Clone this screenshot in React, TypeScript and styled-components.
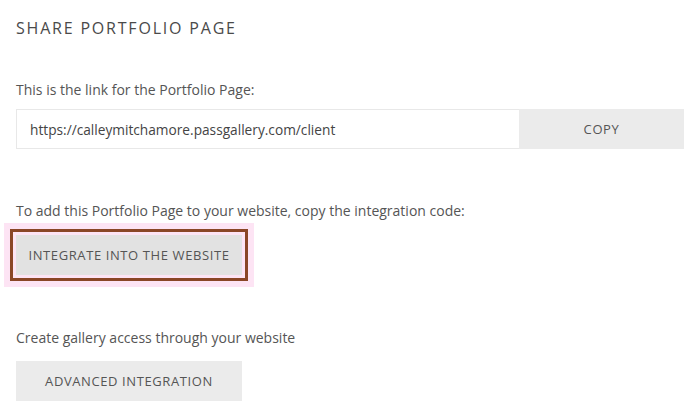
import React from "react";
import styled, { createGlobalStyle } from "styled-components";

const Global = createGlobalStyle`
  html, body { margin: 0; padding: 0; background: #ffffff; }
  body { font-family: "Open Sans", "Liberation Sans", sans-serif; }
`;

const Page = styled.div`
  padding: 17px 4px 0 16px;
  display: flex;
  flex-direction: column;
`;

const Title = styled.h1`
  margin: 0;
  font-size: 16px;
  line-height: 22px;
  font-weight: 400;
  letter-spacing: 1.8px;
  color: #4a4a4a;
  text-transform: uppercase;
`;

const Label = styled.p<{ $top: number; $gap: number }>`
  margin: ${(p) => p.$top}px 0 ${(p) => p.$gap}px 0;
  font-size: 14px;
  line-height: 20px;
  color: #555555;
`;

const LinkRow = styled.div`
  display: flex;
  height: 40px;
`;

const LinkField = styled.div`
  flex: 1;
  box-sizing: border-box;
  border: 1px solid #e8e8e8;
  border-right: none;
  display: flex;
  align-items: center;
  padding-left: 13px;
  font-size: 13.7px;
  color: #444;
`;

const Button = styled.button<{ $width?: number; $tone?: string }>`
  box-sizing: border-box;
  height: 40px;
  width: ${(p) => (p.$width ? `${p.$width}px` : "auto")};
  border: none;
  margin: 0;
  padding: 0;
  background: ${(p) => p.$tone || "#ebebeb"};
  font-family: "Open Sans", "Liberation Sans", sans-serif;
  font-size: 13px;
  letter-spacing: 0.6px;
  color: #555555;
  text-transform: uppercase;
  cursor: pointer;
`;

const ButtonRow = styled.div`
  display: flex;
`;

const Highlighted = styled(Button)`
  outline: 3px solid #8a4626;
  outline-offset: 3px;
  box-shadow: 0 0 0 12px #fde4f4;
`;

export default function App() {
  return (
    <>
      <Global />
      <Page>
        <Title>Share Portfolio Page</Title>
        <Label $top={41} $gap={9}>This is the link for the Portfolio Page:</Label>
        <LinkRow>
          <LinkField>https://calleymitchamore.passgallery.com/client</LinkField>
          <Button $width={165}>Copy</Button>
        </LinkRow>
        <Label $top={52} $gap={14}>
          To add this Portfolio Page to your website, copy the integration code:
        </Label>
        <ButtonRow>
          <Highlighted $width={226} $tone="#e2e2e2">Integrate into the website</Highlighted>
        </ButtonRow>
        <Label $top={53} $gap={13}>Create gallery access through your website</Label>
        <ButtonRow>
          <Button $width={226}>Advanced Integration</Button>
        </ButtonRow>
      </Page>
    </>
  );
}
